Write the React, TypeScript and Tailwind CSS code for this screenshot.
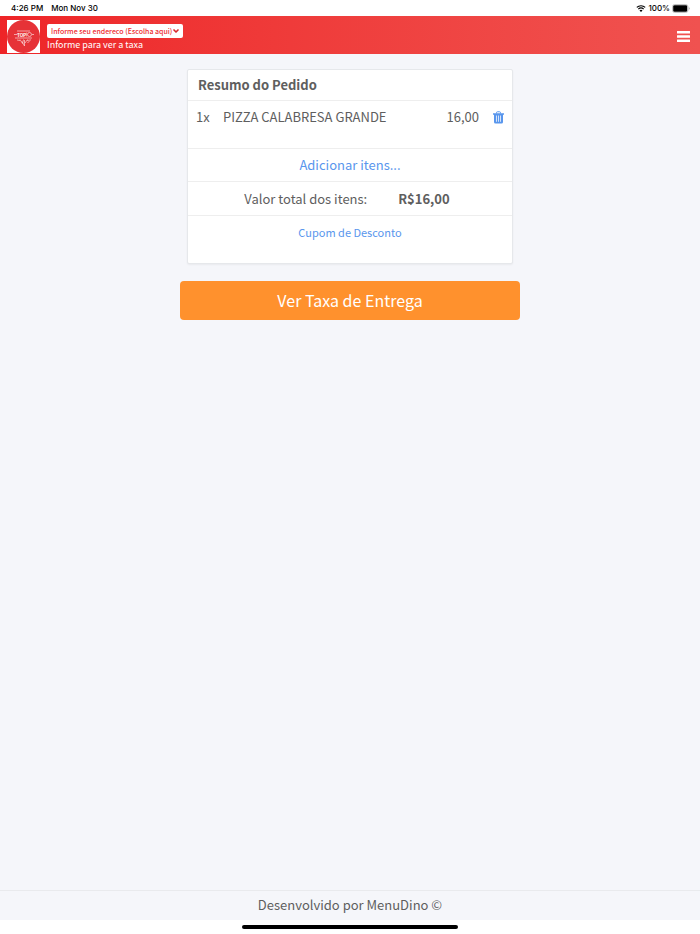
import { useState } from 'react';
import { ChevronDown } from 'lucide-react';

interface OrderItem {
  id: number;
  quantity: number;
  name: string;
  price: string;
}

const ITEMS: OrderItem[] = [
  { id: 1, quantity: 1, name: 'PIZZA CALABRESA GRANDE', price: '16,00' },
];

function WifiIcon() {
  return (
    <svg viewBox="0 0 20 15" className="h-[7px] w-[10px]" aria-hidden="true">
      <path d="M1 5.2a13 13 0 0 1 18 0" fill="none" stroke="#000" strokeWidth="2.6" />
      <path d="M4.3 8.7a8.2 8.2 0 0 1 11.4 0" fill="none" stroke="#000" strokeWidth="2.5" />
      <path d="M10 14.8 6.8 11.6a4.6 4.6 0 0 1 6.4 0Z" fill="#000" />
    </svg>
  );
}

function BatteryIcon() {
  return (
    <svg viewBox="0 0 18 9" className="h-[9px] w-[18px]" aria-hidden="true">
      <rect x="0.5" y="0.5" width="15.5" height="8" rx="2.2" fill="#fff" stroke="#b5b5b5" strokeWidth="0.8" />
      <rect x="1.2" y="1.2" width="14" height="6.6" rx="1.4" fill="#000" />
      <path d="M16.9 3.2c1.1.4 1.1 2.2 0 2.6Z" fill="#a3a3a3" />
    </svg>
  );
}

function Logo() {
  return (
    <svg viewBox="0 0 33 33" className="h-[33px] w-[33px] shrink-0 bg-white" role="img" aria-label="Top 10">
      <circle cx="16.5" cy="16.5" r="16.5" fill="#e63237" />
      <g stroke="#fff" strokeWidth="0.7" fill="none" opacity="0.8">
        <path d="M10 11h13M7 14.5h3.5M25 14.5h2M8 18h17" />
        <path d="M10 20l3 .6M20 20.5l4-.6M13 19.5l2.5 4 1-4M15 21.5l2.5 4.5v-6M18 23l2.5-3.5M22.5 21l-2 2" />
        <circle cx="22.5" cy="14.5" r="2" />
        <path d="M19.7 12.5v4" />
      </g>
      <text x="14.5" y="16.5" fontSize="4.5" fontWeight="700" textAnchor="middle" fill="#fff" fontFamily="Inter, sans-serif">
        TOP
      </text>
    </svg>
  );
}

function MenuIcon() {
  return (
    <svg viewBox="0 0 13 11" className="h-[11px] w-[13px]" fill="#fff" aria-hidden="true">
      <rect y="0" width="13" height="2.5" rx="0.3" />
      <rect y="4.2" width="13" height="2.5" rx="0.3" />
      <rect y="8.5" width="13" height="2.5" rx="0.3" />
    </svg>
  );
}

function TrashIcon() {
  return (
    <svg viewBox="0 0 22 26" className="h-[13px] w-[11px]" aria-hidden="true">
      <path d="M7 5V3.4A1.9 1.9 0 0 1 8.9 1.5h4.2A1.9 1.9 0 0 1 15 3.4V5" fill="none" stroke="#5996ed" strokeWidth="2" />
      <path d="M0 4.5h22v3h-2V22a3 3 0 0 1-3 3H5a3 3 0 0 1-3-3V7.5H0Z" fill="#5996ed" />
      <path d="M7 9v12.5M11 9v12.5M15 9v12.5" stroke="#fff" strokeWidth="1.5" />
    </svg>
  );
}

function StatusBar() {
  return (
    <div className="flex h-4 items-center justify-between bg-white pl-[11px] pr-[10px] font-['Inter',sans-serif] text-[8px] font-medium leading-4 text-black">
      <div className="flex gap-2">
        <span>4:26 PM</span>
        <span>Mon Nov 30</span>
      </div>
      <div className="flex items-center gap-[2px]">
        <WifiIcon />
        <span>100%</span>
        <BatteryIcon />
      </div>
    </div>
  );
}

function Header() {
  return (
    <header className="flex h-[38px] items-center justify-between bg-linear-to-r from-[#ee2427] to-[#f05250] pl-[7px] pr-[10px] pt-[2px]">
      <div className="flex items-center gap-[7px]">
        <Logo />
        <div className="flex flex-col pt-[3px]">
          <div className="relative w-[136px]">
            <select
              aria-label="Endereço de entrega"
              className="block h-[14px] w-full appearance-none rounded-[2px] bg-white pl-[4px] pr-2 text-[7px] font-medium leading-[14px] text-[#ee2c30]"
            >
              <option>Informe seu endereco (Escolha aqui)</option>
            </select>
            <ChevronDown className="pointer-events-none absolute right-[3px] top-[3px] size-2 text-[#d8292d]" strokeWidth={5} />
          </div>
          <span className="text-[9px] leading-[14px] text-white">Informe para ver a taxa</span>
        </div>
      </div>
      <button type="button" aria-label="Menu">
        <MenuIcon />
      </button>
    </header>
  );
}

export default function App() {
  const [items, setItems] = useState(ITEMS);

  return (
    <div className="flex min-h-screen flex-col bg-[#f5f6fa] font-['Noto_Sans_CJK_SC',sans-serif] text-[#5e5e5e]">
      <StatusBar />
      <Header />

      <main className="mx-auto w-full max-w-[340px] flex-1 pt-[15px]">
        <section className="mx-[7px] rounded-[2px] border border-[#e6e8eb] bg-white shadow-xs">
          <h1 className="px-[10px] text-[13px] font-bold leading-[30px]">Resumo do Pedido</h1>

          <ul className="min-h-12 border-t border-[#eeeeee] pt-1">
            {items.map(item => (
              <li key={item.id} className="flex items-center pl-2 pr-2 text-[13px] leading-6">
                <span className="w-[27px]">{item.quantity}x</span>
                <span className="flex-1">{item.name}</span>
                <span>{item.price}</span>
                <button
                  type="button"
                  aria-label="Remover item"
                  className="ml-[14px]"
                  onClick={() => setItems(prev => prev.filter(i => i.id !== item.id))}
                >
                  <TrashIcon />
                </button>
              </li>
            ))}
          </ul>

          <div className="border-t border-[#eeeeee] text-center text-[13px] leading-8">
            <a href="#itens" className="text-[#5996ed]">Adicionar itens...</a>
          </div>

          <div className="flex justify-center gap-[31px] border-t border-[#eeeeee] pr-[6px] text-[13px] leading-[33px]">
            <span>Valor total dos itens:</span>
            <strong>R$16,00</strong>
          </div>

          <div className="h-12 border-t border-[#eeeeee] pt-1 text-center text-[11px] leading-6">
            <a href="#cupom" className="text-[#5996ed]">Cupom de Desconto</a>
          </div>
        </section>

        <button type="button" className="mt-[17px] block w-full rounded-[4px] bg-[#ff912d] text-[16px] leading-[39px] text-white">
          Ver Taxa de Entrega
        </button>
      </main>

      <footer className="border-t border-[#e9eaed] pb-px text-center text-[13px] leading-7">
        Desenvolvido por MenuDino ©
      </footer>
      <div className="flex h-[14px] items-center justify-center bg-white">
        <div className="h-1 w-[216px] rounded-full bg-black" />
      </div>
    </div>
  );
}
